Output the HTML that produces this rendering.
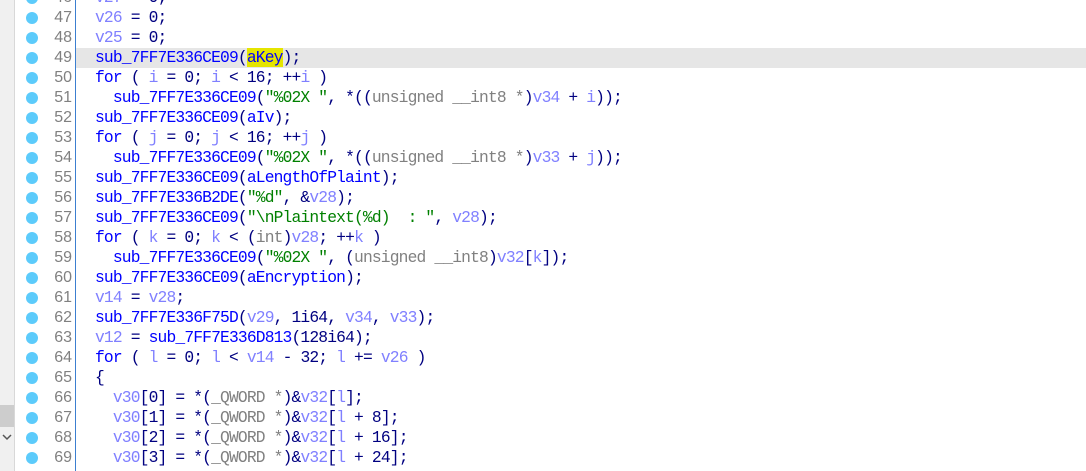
<!DOCTYPE html>
<html><head><meta charset="utf-8"><style>
body{margin:0;width:1086px;height:471px;overflow:hidden;background:#fff;position:relative;font-family:"Liberation Mono",monospace;}
.sb{position:absolute;left:0;top:0;width:14px;height:471px;background:#f0f0f0;border-right:1px solid #d8d8d8;}
.thumb{position:absolute;left:0;top:405px;width:14px;height:22px;background:#cdcdcd;}
.chev{position:absolute;left:1px;top:432px;}
.vl{position:absolute;left:75px;top:0;width:1px;height:471px;background:#3c7fd0;}
.hl{position:absolute;left:76px;top:48px;width:1010px;height:20px;background:#e6e6e6;}
.row{position:absolute;left:0;height:20px;width:1086px;}
.dot{position:absolute;left:26px;top:4px;width:12px;height:12px;border-radius:50%;background:#5ccbfb;}
.ln{position:absolute;left:40px;width:32px;text-align:right;top:0;font-family:"Liberation Sans",sans-serif;font-size:16px;line-height:20px;color:#808080;}
.code{position:absolute;left:95px;top:0;font-size:16.3px;letter-spacing:-0.84px;line-height:20px;white-space:pre;color:#000080;}
.f{color:#0000ff}.v{color:#8080ff}.t{color:#808080}.s{color:#008000}
.y{background:#e5e500}
</style></head><body>
<div class="sb"><div class="thumb"></div><svg class="chev" width="12" height="10"><path d="M2 3 L6 7 L10 3" stroke="#555" stroke-width="1.5" fill="none"/></svg></div>
<div class="hl"></div>
<div class="vl"></div>

<div class="row" style="top:-12px"><div class="dot"></div><div class="ln">46</div><div class="code"><span class="v">v27</span> = 0;</div></div>
<div class="row" style="top:8px"><div class="dot"></div><div class="ln">47</div><div class="code"><span class="v">v26</span> = 0;</div></div>
<div class="row" style="top:28px"><div class="dot"></div><div class="ln">48</div><div class="code"><span class="v">v25</span> = 0;</div></div>
<div class="row" style="top:48px"><div class="dot"></div><div class="ln">49</div><div class="code"><span class="f">sub_7FF7E336CE09</span>(<span class="f y">aKey</span>);</div></div>
<div class="row" style="top:68px"><div class="dot"></div><div class="ln">50</div><div class="code"><span class="f">for</span> ( <span class="v">i</span> = 0; <span class="v">i</span> &lt; 16; ++<span class="v">i</span> )</div></div>
<div class="row" style="top:88px"><div class="dot"></div><div class="ln">51</div><div class="code">  <span class="f">sub_7FF7E336CE09</span>(<span class="s">"%02X "</span>, *((<span class="t">unsigned __int8 *</span>)<span class="v">v34</span> + <span class="v">i</span>));</div></div>
<div class="row" style="top:108px"><div class="dot"></div><div class="ln">52</div><div class="code"><span class="f">sub_7FF7E336CE09</span>(<span class="f">aIv</span>);</div></div>
<div class="row" style="top:128px"><div class="dot"></div><div class="ln">53</div><div class="code"><span class="f">for</span> ( <span class="v">j</span> = 0; <span class="v">j</span> &lt; 16; ++<span class="v">j</span> )</div></div>
<div class="row" style="top:148px"><div class="dot"></div><div class="ln">54</div><div class="code">  <span class="f">sub_7FF7E336CE09</span>(<span class="s">"%02X "</span>, *((<span class="t">unsigned __int8 *</span>)<span class="v">v33</span> + <span class="v">j</span>));</div></div>
<div class="row" style="top:168px"><div class="dot"></div><div class="ln">55</div><div class="code"><span class="f">sub_7FF7E336CE09</span>(<span class="f">aLengthOfPlaint</span>);</div></div>
<div class="row" style="top:188px"><div class="dot"></div><div class="ln">56</div><div class="code"><span class="f">sub_7FF7E336B2DE</span>(<span class="s">"%d"</span>, &amp;<span class="v">v28</span>);</div></div>
<div class="row" style="top:208px"><div class="dot"></div><div class="ln">57</div><div class="code"><span class="f">sub_7FF7E336CE09</span>(<span class="s">"\nPlaintext(%d)  : "</span>, <span class="v">v28</span>);</div></div>
<div class="row" style="top:228px"><div class="dot"></div><div class="ln">58</div><div class="code"><span class="f">for</span> ( <span class="v">k</span> = 0; <span class="v">k</span> &lt; (<span class="t">int</span>)<span class="v">v28</span>; ++<span class="v">k</span> )</div></div>
<div class="row" style="top:248px"><div class="dot"></div><div class="ln">59</div><div class="code">  <span class="f">sub_7FF7E336CE09</span>(<span class="s">"%02X "</span>, (<span class="t">unsigned __int8</span>)<span class="v">v32</span>[<span class="v">k</span>]);</div></div>
<div class="row" style="top:268px"><div class="dot"></div><div class="ln">60</div><div class="code"><span class="f">sub_7FF7E336CE09</span>(<span class="f">aEncryption</span>);</div></div>
<div class="row" style="top:288px"><div class="dot"></div><div class="ln">61</div><div class="code"><span class="v">v14</span> = <span class="v">v28</span>;</div></div>
<div class="row" style="top:308px"><div class="dot"></div><div class="ln">62</div><div class="code"><span class="f">sub_7FF7E336F75D</span>(<span class="v">v29</span>, 1i64, <span class="v">v34</span>, <span class="v">v33</span>);</div></div>
<div class="row" style="top:328px"><div class="dot"></div><div class="ln">63</div><div class="code"><span class="v">v12</span> = <span class="f">sub_7FF7E336D813</span>(128i64);</div></div>
<div class="row" style="top:348px"><div class="dot"></div><div class="ln">64</div><div class="code"><span class="f">for</span> ( <span class="v">l</span> = 0; <span class="v">l</span> &lt; <span class="v">v14</span> - 32; <span class="v">l</span> += <span class="v">v26</span> )</div></div>
<div class="row" style="top:368px"><div class="dot"></div><div class="ln">65</div><div class="code">{</div></div>
<div class="row" style="top:388px"><div class="dot"></div><div class="ln">66</div><div class="code">  <span class="v">v30</span>[0] = *(<span class="t">_QWORD *</span>)&amp;<span class="v">v32</span>[<span class="v">l</span>];</div></div>
<div class="row" style="top:408px"><div class="dot"></div><div class="ln">67</div><div class="code">  <span class="v">v30</span>[1] = *(<span class="t">_QWORD *</span>)&amp;<span class="v">v32</span>[<span class="v">l</span> + 8];</div></div>
<div class="row" style="top:428px"><div class="dot"></div><div class="ln">68</div><div class="code">  <span class="v">v30</span>[2] = *(<span class="t">_QWORD *</span>)&amp;<span class="v">v32</span>[<span class="v">l</span> + 16];</div></div>
<div class="row" style="top:448px"><div class="dot"></div><div class="ln">69</div><div class="code">  <span class="v">v30</span>[3] = *(<span class="t">_QWORD *</span>)&amp;<span class="v">v32</span>[<span class="v">l</span> + 24];</div></div>
</body></html>
